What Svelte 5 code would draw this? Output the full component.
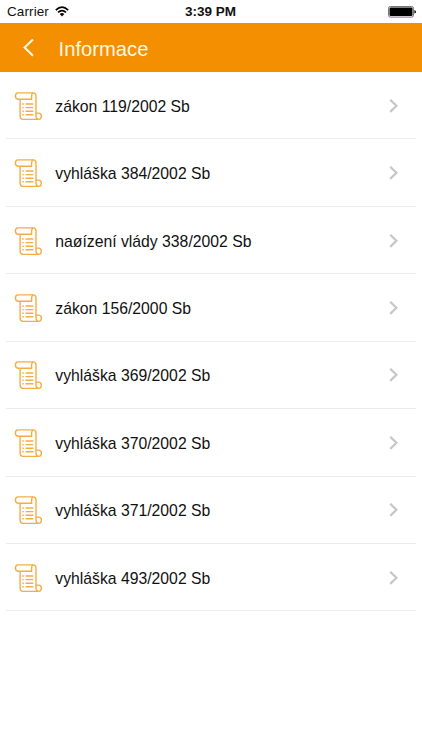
<script>
  const documents = [
    'zákon 119/2002 Sb',
    'vyhláška 384/2002 Sb',
    'naøízení vlády 338/2002 Sb',
    'zákon 156/2000 Sb',
    'vyhláška 369/2002 Sb',
    'vyhláška 370/2002 Sb',
    'vyhláška 371/2002 Sb',
    'vyhláška 493/2002 Sb'
  ];
</script>

<div class="screen">
  <div class="status">
    <div class="carrier">
      <span>Carrier</span>
      <svg class="wifi" width="14" height="11" viewBox="0 0 14 11" fill="none" stroke="#000" stroke-width="1.6">
        <path d="M.8 4.1Q7-1.7 13.2 4.1" />
        <path d="M3 6.4Q7 2.9 11 6.4" />
        <path d="M4.7 8.1Q7 6.1 9.3 8.1L7 10.4Z" fill="#000" stroke="none" />
      </svg>
    </div>
    <span class="time">3:39 PM</span>
    <svg class="battery" width="28" height="12" viewBox="0 0 28 12">
      <rect x=".5" y=".5" width="25" height="10.6" rx="1.8" fill="#fff" stroke="#777" />
      <rect x="1.5" y="1.5" width="23" height="8.6" rx="1" fill="#000" />
      <path d="M26.4 4Q28 4.4 28 5.8T26.4 7.6Z" fill="#000" />
    </svg>
  </div>
  <header>
    <svg class="back" width="14" height="20" viewBox="0 0 14 20" fill="none" stroke="#fff8e4" stroke-width="2.1">
      <path d="M12 1.6L3.6 9.6L12 17.8" />
    </svg>
    <h1>Informace</h1>
  </header>
  <ul>
    {#each documents as title}
      <li>
        <svg class="scroll" width="30" height="30" viewBox="0 0 30 30" fill="none" stroke="#f4ad45" stroke-width="1.4">
          <path d="M5 1.9H20.1Q23 1.9 23 5V22.1H26Q28.4 22.4 28.4 25.2Q28.2 28.4 25.4 28.4H10Q7.1 28.2 7.1 25V8.2" />
          <path d="M20.1 1.9Q18.6 2.7 18.6 5V8.2H5Q2.4 7.9 2.4 5T5 1.9" />
          <path d="M23 22.1V25.2Q23.2 28.2 25.4 28.4" />
          <path d="M9.3 13H10.8M12.5 13H20.4M9.3 16.6H10.8M12.5 16.6H20.4M9.3 20.2H10.8M12.5 20.2H20.4M9.3 23.8H10.8M12.5 23.8H20.4" />
        </svg>
        <span class="title">{title}</span>
        <svg class="chevron" width="10" height="16" viewBox="0 0 10 16" fill="none" stroke="#c8c8cc" stroke-width="2.3">
          <path d="M1.2 1.7L7.4 7.8L1.2 13.9" />
        </svg>
      </li>
    {/each}
  </ul>
</div>

<style>
  :global(body) { background: #fff; }
  .screen {
    height: 750px;
    overflow: hidden;
    background: #fff;
    font-family: "Liberation Sans", Arial, sans-serif;
    color: #111;
  }
  .status {
    box-sizing: border-box;
    height: 23px;
    display: grid;
    grid-template-columns: 1fr auto 1fr;
    align-items: center;
    padding: 1px 7px 0 6px;
    font-size: 13.5px;
    line-height: 22px;
  }
  .carrier { display: flex; align-items: center; gap: 6px; padding-left: 1px; letter-spacing: .1px; }
  .wifi { margin-top: -1px; }
  .time { font-weight: 700; }
  .battery { justify-self: end; margin-right: -1px; }
  header {
    box-sizing: border-box;
    height: 49px;
    display: flex;
    align-items: center;
    padding-left: 21px;
    background: #f38f00;
  }
  h1 {
    margin: 2px 0 0 23.6px;
    font-size: 20.2px;
    font-weight: 400;
    line-height: 24px;
    color: #fff8e4;
  }
  ul { list-style: none; margin: 0; padding: 0 6px; }
  li {
    box-sizing: border-box;
    height: 67.43px;
    display: flex;
    align-items: center;
    padding: 1px 17px 0 7px;
    border-bottom: 1px solid #ebebeb;
  }
  .scroll { margin-top: 0; }
  .title {
    flex: 1;
    margin: 2px 0 0 12.3px;
    font-size: 15.75px;
    line-height: 20px;
    white-space: nowrap;
  }
</style>
